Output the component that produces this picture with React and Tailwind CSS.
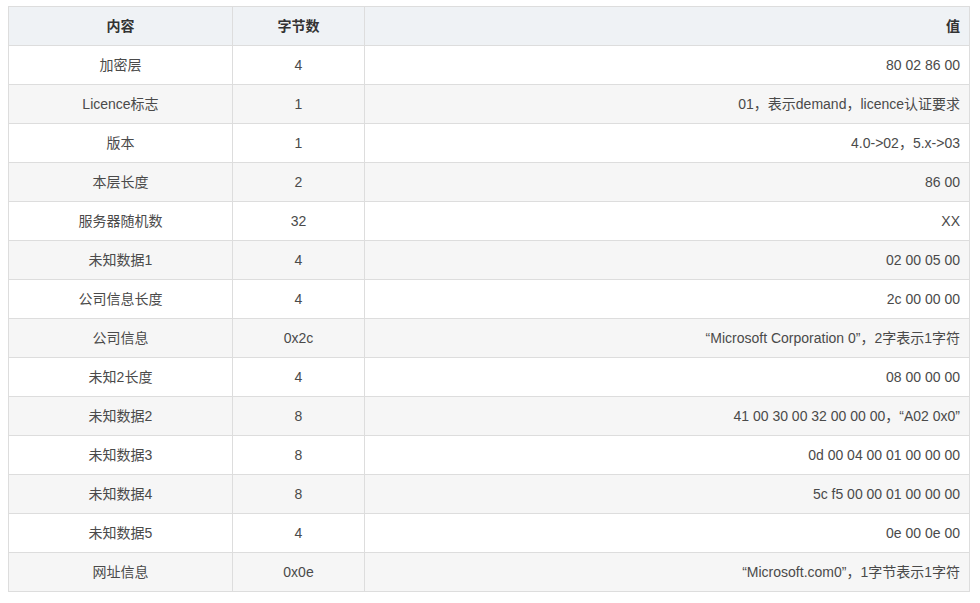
const rows = [
  ['加密层', '4', '80 02 86 00'],
  ['Licence标志', '1', '01，表示demand，licence认证要求'],
  ['版本', '1', '4.0->02，5.x->03'],
  ['本层长度', '2', '86 00'],
  ['服务器随机数', '32', 'XX'],
  ['未知数据1', '4', '02 00 05 00'],
  ['公司信息长度', '4', '2c 00 00 00'],
  ['公司信息', '0x2c', '“Microsoft Corporation 0”，2字表示1字符'],
  ['未知2长度', '4', '08 00 00 00'],
  ['未知数据2', '8', '41 00 30 00 32 00 00 00，“A02 0x0”'],
  ['未知数据3', '8', '0d 00 04 00 01 00 00 00'],
  ['未知数据4', '8', '5c f5 00 00 01 00 00 00'],
  ['未知数据5', '4', '0e 00 0e 00'],
  ['网址信息', '0x0e', '“Microsoft.com0”，1字节表示1字符'],
];

export default function App() {
  return (
    <div
      className="bg-white w-[980px] h-[603px] pt-[6px] pl-[8px]"
      style={{ fontFamily: '"Liberation Sans", "Noto Sans CJK SC", sans-serif' }}
    >
      <table className="border-collapse w-[962px] text-[14px] text-[#4a4a4a]">
        <thead>
          <tr className="bg-[#eff2f5] h-[39px]">
            <th className="w-[224px] border border-[#dddddd] font-bold text-[#333] text-center">内容</th>
            <th className="w-[132px] border border-[#dddddd] font-bold text-[#333] text-center">字节数</th>
            <th className="border border-[#dddddd] font-bold text-[#333] text-right pr-[9px]">值</th>
          </tr>
        </thead>
        <tbody>
          {rows.map((r, i) => (
            <tr key={i} className={`h-[39px] ${i % 2 === 1 ? 'bg-[#f6f6f6]' : 'bg-white'}`}>
              <td className="border border-[#dddddd] text-center">{r[0]}</td>
              <td className="border border-[#dddddd] text-center">{r[1]}</td>
              <td className="border border-[#dddddd] text-right pr-[9px]">{r[2]}</td>
            </tr>
          ))}
        </tbody>
      </table>
    </div>
  );
}
